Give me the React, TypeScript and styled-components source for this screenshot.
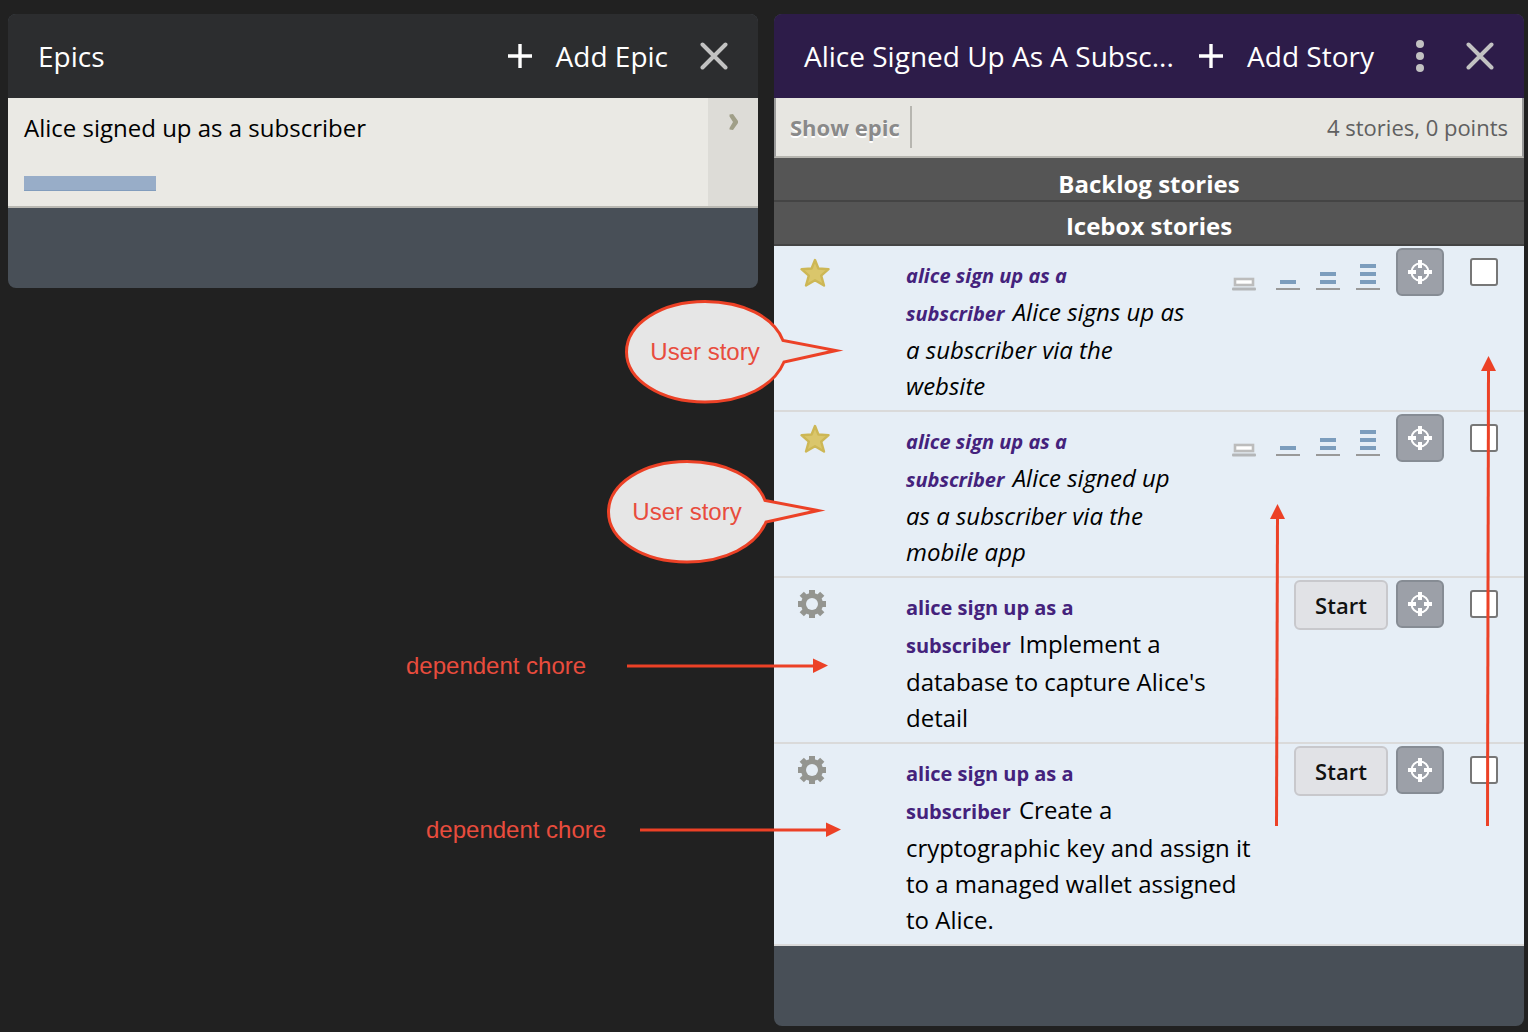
import React from "react";
import styled, { createGlobalStyle } from "styled-components";

const GlobalStyle = createGlobalStyle`
  *, *::before, *::after { box-sizing: border-box; }
  body {
    margin: 0;
    background: #212121;
    font-family: "Open Sans", "Noto Sans", sans-serif;
    color: #000;
  }
  button { font-family: inherit; cursor: pointer; }
  h1, h2, h3, p, ul { margin: 0; padding: 0; font-weight: 400; }
  svg { display: block; }
`;

const Board = styled.main`
  position: relative;
  display: flex;
  align-items: flex-start;
  gap: 16px;
  padding: 14px 4px 6px 8px;
`;

const Panel = styled.section`
  flex: 1 1 0;
  min-width: 0;
  padding-bottom: 80px;
  border-radius: 8px;
  background: #484f57;
  overflow: hidden;
`;

const PanelHeader = styled.header<{ $tone: string }>`
  display: flex;
  align-items: center;
  gap: 32px;
  height: 84px;
  padding: 0 30px;
  background: ${(p) => p.$tone};
  color: #fff;
`;

const PanelTitle = styled.h2`
  flex: 1;
  min-width: 0;
  font-size: 28px;
  line-height: 36px;
  white-space: nowrap;
`;

const AddButton = styled.button`
  display: flex;
  align-items: center;
  gap: 24px;
  padding: 0;
  border: 0;
  background: none;
  color: #fff;
  font-size: 28px;
  line-height: 36px;
  white-space: nowrap;
`;

const IconButton = styled.button`
  display: flex;
  justify-content: center;
  width: 28px;
  padding: 0;
  border: 0;
  background: none;
  color: #c2c2c2;
`;

const EpicRow = styled.article`
  display: flex;
  border-bottom: 2px solid #b9b8b2;
  background: #eae9e4;
`;

const EpicBody = styled.div`
  flex: 1;
  padding: 12px 16px 15px;
`;

const EpicName = styled.h3`
  margin-bottom: 30px;
  font-size: 24px;
  line-height: 36px;
`;

const Progress = styled.div`
  width: 132px;
  height: 15px;
  border-bottom: 1px solid #829dbd;
  background: #98adc8;
`;

const Expander = styled.button`
  display: flex;
  justify-content: center;
  align-items: flex-start;
  width: 50px;
  padding: 16px 0 0;
  border: 0;
  background: #dddcd7;
`;

const SubBar = styled.div`
  display: flex;
  justify-content: space-between;
  align-items: center;
  height: 60px;
  padding: 0 14px;
  border: solid #b7b6b0;
  border-width: 0 2px 2px;
  border-left-color: #999;
  border-right-color: #999;
  background: #e7e6e1;
`;

const ShowEpic = styled.button`
  height: 42px;
  padding: 0 10px 0 0;
  border: 0;
  border-right: 2px solid #b7b6b0;
  background: none;
  color: #8a8a8a;
  font-size: 22px;
  font-weight: 700;
  line-height: 36px;
  text-shadow: 0 2px 0 #fff;
`;

const Stats = styled.p`
  color: #606060;
  font-size: 22px;
  line-height: 36px;
`;

const GroupHeading = styled.h3<{ $first?: boolean }>`
  height: 44px;
  padding-top: ${(p) => (p.$first ? 10 : 8)}px;
  border-bottom: 2px solid #444;
  background: #555;
  color: #fff;
  font-size: 24px;
  font-weight: 700;
  line-height: 32px;
  text-align: center;
`;

const StoryList = styled.ul`
  list-style: none;
`;

const StoryRow = styled.li`
  display: flex;
  align-items: flex-start;
  padding-right: 26px;
  border-bottom: 2px solid #dadada;
  background: #e6eef6;
`;

const TypeIcon = styled.div`
  flex: none;
  width: 132px;
  padding: 12px 0 0 24px;
`;

const StoryName = styled.p<{ $italic: boolean }>`
  flex: 1;
  min-width: 0;
  padding: 10px 0 6px;
  font-size: 24px;
  font-style: ${(p) => (p.$italic ? "italic" : "normal")};
  line-height: 36px;
`;

const EpicLabel = styled.a`
  margin-right: 2px;
  color: #44227c;
  font-size: 20px;
  font-weight: 700;
  line-height: 36px;
  text-decoration: none;
`;

const Actions = styled.div`
  display: flex;
  align-items: flex-start;
  gap: 8px;
  margin-left: 40px;
  padding-top: 2px;
`;

const Estimates = styled.div`
  display: flex;
  gap: 16px;
  margin-right: 8px;
  padding-top: 16px;
`;

const EstimateButton = styled.button<{ $spaced: boolean }>`
  margin-right: ${(p) => (p.$spaced ? 4 : 0)}px;
  padding: 0;
  border: 0;
  background: none;
`;

const StartButton = styled.button`
  width: 94px;
  height: 50px;
  padding: 0;
  border: 2px solid #c8c8cc;
  border-radius: 6px;
  background: #e1e2e6;
  color: #111;
  font-size: 22px;
  font-weight: 600;
`;

const FocusButton = styled.button`
  display: flex;
  align-items: center;
  justify-content: center;
  width: 48px;
  height: 48px;
  padding: 0;
  border: 2px solid #868c94;
  border-radius: 6px;
  background: #9ca0a8;
`;

const SelectBox = styled.input`
  appearance: none;
  width: 28px;
  height: 28px;
  margin: 10px 0 0 18px;
  border: 2px solid #777;
  border-radius: 3px;
  background: #fff;
`;

const Note = styled.div<{ $x: number; $y: number }>`
  position: absolute;
  left: ${(p) => p.$x}px;
  top: ${(p) => p.$y}px;
  display: flex;
  align-items: center;
  pointer-events: none;
`;

const NoteText = styled.span`
  color: #e84c3d;
  font-family: "Liberation Sans", Arial, sans-serif;
  font-size: 24px;
  line-height: 28px;
  white-space: nowrap;
`;

const Bubble = styled.div`
  display: grid;
  align-items: center;
  width: 220px;
  height: 104px;
  & > * { grid-area: 1 / 1; }
  & > span { width: 162px; text-align: center; }
`;

const RED = "#ec4126";

const PlusIcon = () => (
  <svg width="24" height="24" viewBox="0 0 24 24" stroke="#fff" strokeWidth="3.400" aria-hidden="true">
    <path d="M12 0V24M0 12H24" />
  </svg>
);

const CloseIcon = () => (
  <svg width="28" height="28" viewBox="0 0 28 28" stroke="currentColor" strokeWidth="4" strokeLinecap="round" aria-hidden="true">
    <path d="M2.500 2.500L25.500 25.500M25.500 2.500L2.500 25.500" />
  </svg>
);

const MoreIcon = () => (
  <svg width="8" height="32" viewBox="0 0 8 32" fill="currentColor" aria-hidden="true">
    <circle cx="4" cy="4" r="4" />
    <circle cx="4" cy="16" r="4" />
    <circle cx="4" cy="28" r="4" />
  </svg>
);

const ChevronIcon = () => (
  <svg width="10" height="16" viewBox="0 0 10 16" fill="#a09f88" aria-hidden="true">
    <path d="M1.500 0.500L5 0L10 7V9L5 16L1.500 15.500V14L5 8L1.500 2.500Z" />
  </svg>
);

const StarIcon = () => (
  <svg width="34" height="30" viewBox="0 0 34 30" aria-hidden="true">
    <path
      d="M17 2L20.400 10.500L30.500 11.200L23.200 17.600L26 27.500L17 22.300L8 27.500L10.800 17.600L3.500 11.200L13.600 10.500Z"
      fill="#dac66b"
      stroke="#cdb755"
      strokeWidth="2.400"
      strokeLinejoin="round"
    />
  </svg>
);

const GearIcon = () => (
  <svg width="28" height="28" viewBox="0 0 28 28" aria-hidden="true">
    <g fill="#949590">
      {[0, 45, 90, 135].map((a) => (
        <rect key={a} x="11" y={a % 90 ? -0.5 : 0} width="6" height={a % 90 ? 29 : 28} transform={`rotate(${a} 14 14)`} />
      ))}
      <circle cx="14" cy="14" r="11" />
    </g>
    <circle cx="14" cy="14" r="6" fill="#e6eef6" />
  </svg>
);

const TargetIcon = () => (
  <svg width="24" height="24" viewBox="0 0 24 24" fill="none" stroke="#fff" aria-hidden="true">
    <circle cx="12" cy="12" r="8.500" strokeWidth="2" />
    <path d="M12 0V8M12 16V24M0 12H8M16 12H24" strokeWidth="4" />
  </svg>
);

const EstimateIcon = ({ points }: { points: number }) => (
  <svg width="24" height="28" viewBox="0 0 24 28" aria-hidden="true">
    {points === 0 && <rect x="3" y="15" width="18" height="6" fill="#fff" stroke="#bcbcbc" strokeWidth="2.600" />}
    {Array.from({ length: points }, (_, i) => (
      <rect key={i} x="4" y={16 - i * 8} width="16" height="4" fill="#7c9dbd" />
    ))}
    {points === 0 ? (
      <rect x="0" y="23.500" width="24" height="3" rx="1" fill="#b4b6b8" />
    ) : (
      <rect x="0" y="24" width="24" height="2" fill="#999" />
    )}
  </svg>
);

const HorizontalArrow = () => (
  <svg width="202" height="16" viewBox="0 0 202 16" aria-hidden="true">
    <path d="M0 8H190" stroke={RED} strokeWidth="3" />
    <path d="M186 0.500L201 7.500L186 15Z" fill={RED} />
  </svg>
);

const VerticalArrow = ({ length }: { length: number }) => (
  <svg width="16" height={length} viewBox={`0 0 16 ${length}`} aria-hidden="true">
    <path d={`M8.500 12L7.500 ${length}`} stroke={RED} strokeWidth="3" />
    <path d="M8.500 0L16 15H1Z" fill={RED} />
  </svg>
);

const UserStoryBubble = () => (
  <Bubble>
    <svg width="220" height="104" viewBox="0 0 220 104" aria-hidden="true">
      <path
        d="M159 40.500C150 17 119 1.500 81 1.500C37 1.500 2.500 24 2.500 52S37 102 81 102C119 102 150 86 160 62L212 50.500Z"
        fill="#e6e6e6"
        stroke={RED}
        strokeWidth="3"
        strokeMiterlimit="10"
      />
    </svg>
    <NoteText>User story</NoteText>
  </Bubble>
);

type Story = { id: string; kind: "feature" | "chore"; name: string };

const stories: Story[] = [
  { id: "s1", kind: "feature", name: "Alice signs up as a subscriber via the website" },
  { id: "s2", kind: "feature", name: "Alice signed up as a subscriber via the mobile app" },
  { id: "s3", kind: "chore", name: "Implement a database to capture Alice's detail" },
  { id: "s4", kind: "chore", name: "Create a cryptographic key and assign it to a managed wallet assigned to Alice." },
];

const StoryItem = ({ story }: { story: Story }) => {
  const feature = story.kind === "feature";
  return (
    <StoryRow>
      <TypeIcon>{feature ? <StarIcon /> : <GearIcon />}</TypeIcon>
      <StoryName $italic={feature}>
        <EpicLabel href="#epic">
          <span>alice sign up as a</span>
          <br />
          <span>subscriber</span>
        </EpicLabel>{" "}
        <span>{story.name}</span>
      </StoryName>
      <Actions>
        {feature ? (
          <Estimates>
            {[0, 1, 2, 3].map((n) => (
              <EstimateButton key={n} $spaced={n === 0} aria-label={`${n} points`}>
                <EstimateIcon points={n} />
              </EstimateButton>
            ))}
          </Estimates>
        ) : (
          <StartButton>Start</StartButton>
        )}
        <FocusButton aria-label="Reveal story">
          <TargetIcon />
        </FocusButton>
        <SelectBox type="checkbox" aria-label={`Select ${story.name}`} />
      </Actions>
    </StoryRow>
  );
};

export default function App() {
  return (
    <>
      <GlobalStyle />
      <Board>
        <Panel>
          <PanelHeader $tone="#2c2d2f">
            <PanelTitle>Epics</PanelTitle>
            <AddButton>
              <PlusIcon />
              Add Epic
            </AddButton>
            <IconButton aria-label="Close epics">
              <CloseIcon />
            </IconButton>
          </PanelHeader>
          <EpicRow>
            <EpicBody>
              <EpicName>Alice signed up as a subscriber</EpicName>
              <Progress />
            </EpicBody>
            <Expander aria-label="Open epic">
              <ChevronIcon />
            </Expander>
          </EpicRow>
        </Panel>

        <Panel>
          <PanelHeader $tone="#2d1c49">
            <PanelTitle>Alice Signed Up As A Subsc...</PanelTitle>
            <AddButton>
              <PlusIcon />
              Add Story
            </AddButton>
            <IconButton aria-label="More actions">
              <MoreIcon />
            </IconButton>
            <IconButton aria-label="Close epic">
              <CloseIcon />
            </IconButton>
          </PanelHeader>
          <SubBar>
            <ShowEpic>Show epic</ShowEpic>
            <Stats>4 stories, 0 points</Stats>
          </SubBar>
          <GroupHeading $first>Backlog stories</GroupHeading>
          <GroupHeading>Icebox stories</GroupHeading>
          <StoryList>
            {stories.map((s) => (
              <StoryItem key={s.id} story={s} />
            ))}
          </StoryList>
        </Panel>

        <Note $x={624} $y={300}>
          <UserStoryBubble />
        </Note>
        <Note $x={606} $y={460}>
          <UserStoryBubble />
        </Note>
        <Note $x={406} $y={652}>
          <NoteText>dependent chore</NoteText>
        </Note>
        <Note $x={627} $y={658}>
          <HorizontalArrow />
        </Note>
        <Note $x={426} $y={816}>
          <NoteText>dependent chore</NoteText>
        </Note>
        <Note $x={640} $y={822}>
          <HorizontalArrow />
        </Note>
        <Note $x={1269} $y={504}>
          <VerticalArrow length={322} />
        </Note>
        <Note $x={1480} $y={356}>
          <VerticalArrow length={470} />
        </Note>
      </Board>
    </>
  );
}
